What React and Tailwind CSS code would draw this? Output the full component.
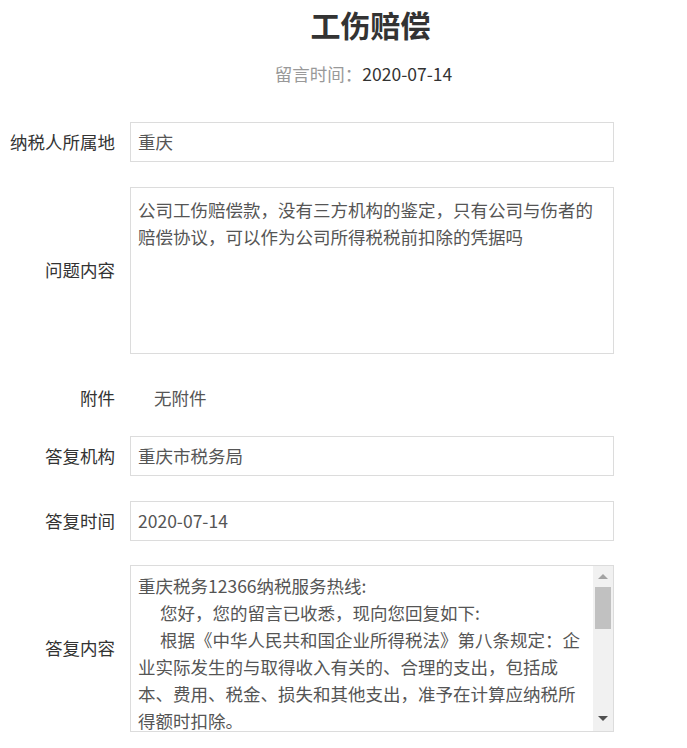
export default function App() {
  const box = "ml-[15px] w-[484px] border border-[#dcdcdc] text-[#555] bg-white";
  return (
    <div className="w-[687px] h-[748px] overflow-hidden bg-white text-[#333] text-[17.5px] font-['Noto_Sans_CJK_SC',sans-serif]">
      <div className="h-[48px] flex items-center justify-center pl-[54px] text-[30px] font-bold leading-none text-[#333]">
        工伤赔偿
      </div>
      <div className="mt-[11px] h-[30px] leading-[30px] flex justify-center pl-[40px]">
        <span className="text-[#999]">留言时间：</span>
        <span className="text-[#333]">2020-07-14</span>
      </div>

      <div className="mt-[33px] flex flex-col">
        <div className="flex items-center h-[40px]">
          <div className="w-[115px] text-right whitespace-nowrap">纳税人所属地</div>
          <div className={box + " h-[40px] px-[7px] flex items-center"}>重庆</div>
        </div>

        <div className="mt-[25px] flex items-center h-[167px]">
          <div className="w-[115px] text-right whitespace-nowrap">问题内容</div>
          <div className={box + " h-[167px] px-[7px] pt-[8px] leading-[27px] overflow-hidden"}>
            <div className="whitespace-nowrap">公司工伤赔偿款，没有三方机构的鉴定，只有公司与伤者的</div>
            <div className="whitespace-nowrap">赔偿协议，可以作为公司所得税税前扣除的凭据吗</div>
          </div>
        </div>

        <div className="mt-[24px] flex items-center h-[40px]">
          <div className="w-[115px] text-right whitespace-nowrap">附件</div>
          <div className="ml-[15px] pl-[24px] text-[#555]">无附件</div>
        </div>

        <div className="mt-[18px] flex items-center h-[40px]">
          <div className="w-[115px] text-right whitespace-nowrap">答复机构</div>
          <div className={box + " h-[40px] px-[7px] flex items-center"}>重庆市税务局</div>
        </div>

        <div className="mt-[25px] flex items-center h-[40px]">
          <div className="w-[115px] text-right whitespace-nowrap">答复时间</div>
          <div className={box + " h-[40px] px-[7px] flex items-center"}>2020-07-14</div>
        </div>

        <div className="mt-[24px] flex items-center h-[167px]">
          <div className="w-[115px] text-right whitespace-nowrap">答复内容</div>
          <div className={box + " h-[167px] flex"}>
            <div className="flex-1 px-[7px] pt-[6px] leading-[27px] overflow-hidden">
              <div className="whitespace-nowrap">重庆税务12366纳税服务热线:</div>
              <div className="whitespace-nowrap pl-[22px]">您好，您的留言已收悉，现向您回复如下:</div>
              <div className="whitespace-nowrap pl-[22px]">根据《中华人民共和国企业所得税法》第八条规定：企</div>
              <div className="whitespace-nowrap">业实际发生的与取得收入有关的、合理的支出，包括成</div>
              <div className="whitespace-nowrap">本、费用、税金、损失和其他支出，准予在计算应纳税所</div>
              <div className="whitespace-nowrap">得额时扣除。</div>
            </div>
            <div className="w-[20px] bg-[#f1f1f1] flex flex-col items-center">
              <div className="h-[21px] flex items-center justify-center">
                <svg width="10" height="5" viewBox="0 0 10 5"><polygon points="0,5 10,5 5,0" fill="#a3a3a3" /></svg>
              </div>
              <div className="h-[42px] w-[16px] bg-[#c1c1c1]"></div>
              <div className="flex-1"></div>
              <div className="h-[26px] flex items-center justify-center">
                <svg width="10" height="5" viewBox="0 0 10 5"><polygon points="0,0 10,0 5,5" fill="#505050" /></svg>
              </div>
            </div>
          </div>
        </div>
      </div>
    </div>
  );
}
